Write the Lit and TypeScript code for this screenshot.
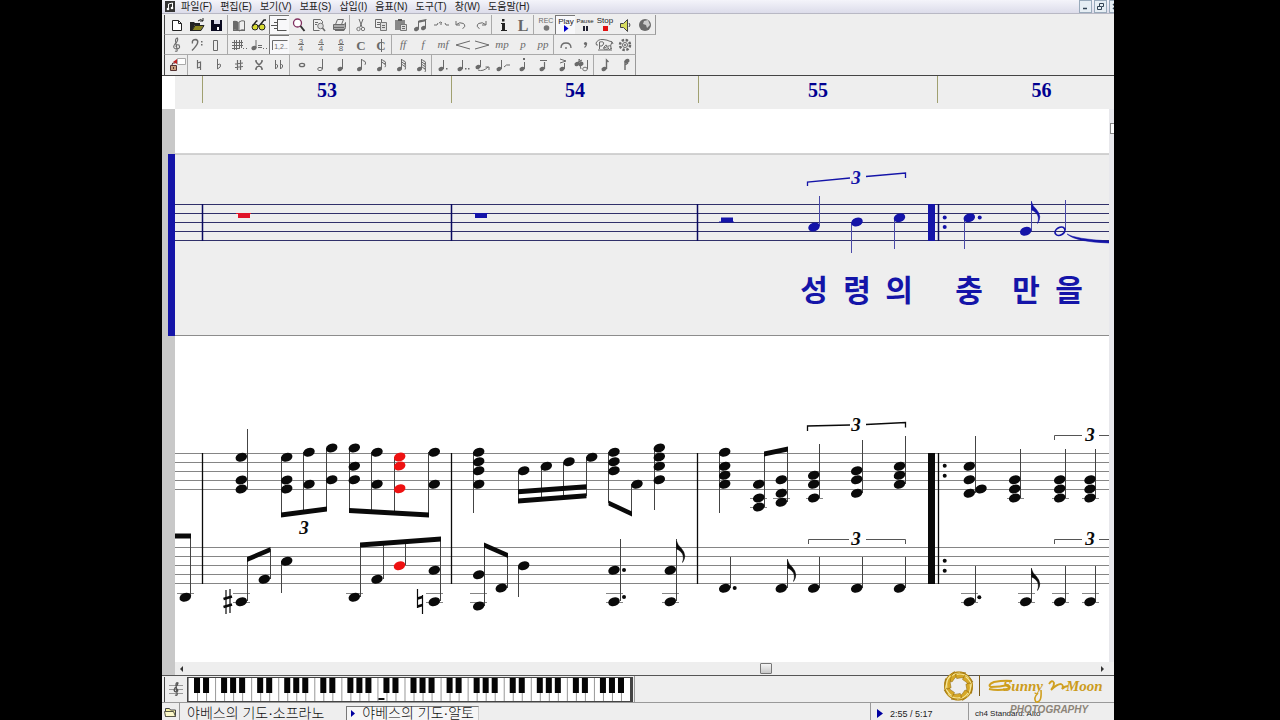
import { LitElement, html, svg, css } from "lit";
import { customElement } from "lit/decorators.js";

const INK = "#0a0a0a";
const BLUE = "#1414a8";
const RED = "#ee1111";

/* ---------- toolbar icons, 20 x 18 each ---------- */

const G = "#6a6a6a";
const line = (d: string, color = G, w = 1) =>
  svg`<path d=${d} fill="none" stroke=${color} stroke-width=${w} />`;
const fill = (d: string, color = G) => svg`<path d=${d} fill=${color} />`;
const glyph = (t: string, x: number, y: number, size: number, cls = "dyn", color = G) =>
  svg`<text x=${x} y=${y} font-size=${size} class=${cls} fill=${color} text-anchor="middle">${t}</text>`;
const head = (x: number, y: number, color = G) =>
  svg`<ellipse cx=${x} cy=${y} rx="2.600" ry="2" fill=${color} transform="rotate(-20 ${x} ${y})" />`;
const flags = (n: number) =>
  Array.from({ length: n }, (_, i) => line(`M10.500 ${3 + i * 2.4}q1 2 3.500 2.400q1.200 1.400 0 3.400`));
const meter = (a: string, b: string) => svg`${glyph(a, 10, 8, 8, "num")}${glyph(b, 10, 15, 8, "num")}${line("M7 8.500h6")}`;

const icons: Record<string, unknown> = {
  new: svg`<path d="M5.500 4.500h6l3 3v7h-9z" fill="#fff" stroke="#222" />${line("M11.500 4.500v3h3", "#222")}`,
  open: svg`${fill("M3 6h4l1 1h5v2H8l-3 6H3z", "#222")}${fill("M5 14l3-5h9l-3 5z", "#8a8420")}${line("M5 14.500l3-5h9l-3 5zM11 5q3-3 5 0M16 2v3h-3", "#222")}`,
  save: svg`${fill("M4 4h11v11H4z", "#0a0a20")}${fill("M7 4h6v4H7z", "#d8d8e8")}${fill("M10 11h2v3h-2z", "#fff")}`,
  book: svg`${fill("M4 5q3-1 5.500 1v9Q7 13 4 14z")}${line("M10 6q3-2 5.500-1v9q-3-1-5.500 1zM4 14.500h12")}`,
  glasses: svg`<circle cx="6" cy="11" r="3" fill="#d8dc30" stroke="#222" /><circle cx="13" cy="11" r="3" fill="#d8dc30" stroke="#222" />${line("M3.500 10l4-5h1M11 9l4-5h2M9 10h1", "#222", 1.4)}`,
  split: svg`${line("M2 9.500h7M8.500 3v12M8.500 3.500h9M8.500 14.500h9M5 6.500h4M5 12.500h4", "#555")}`,
  zoom: svg`<circle cx="8.500" cy="7" r="4" fill="#fff" stroke="#803060" stroke-width="1.300" />${line("M11.500 10l4 5", "#333", 2)}`,
  preview: svg`${line("M4.500 14.500v-11h7l2 2v2M4.500 14.500h6M6 6.500h3M6 8.500h2")}<circle cx="11.500" cy="10" r="2.800" fill="#ddd" stroke="#777" />${line("M13.500 12l2.500 3", G, 1.6)}`,
  print: svg`${fill("M4 9h12v4H4z", "#aaa")}${line("M6.500 8.500l2-5h6l-2 5M4.500 8.500h11l1-2v5l-1 2h-11zM6 14.500h9l1-2M5 11.500h10")}`,
  cut: svg`${line("M8 3l3 8M12 3L9 11")}<circle cx="7.500" cy="13" r="1.700" fill="none" stroke="#777" /><circle cx="12" cy="13" r="1.700" fill="none" stroke="#777" />`,
  copy: svg`${line("M4.500 3.500h6v8h-6zM6 6.500h3M6 8.500h3")}<path d="M9.500 6.500h6v8h-6z" fill="#ddd" stroke="#777" />${line("M11 9.500h3M11 11.500h3")}`,
  paste: svg`${fill("M4 4h10v10H4z", "#888")}${fill("M7 3h4v2H7z", "#555")}<path d="M9.500 8.500h6v6h-6z" fill="#ddd" stroke="#777" />${line("M11 10.500h3M11 12.500h3")}`,
  beam: svg`${head(5.5, 13)}${head(12.5, 12)}${line("M7.500 13V5l8-1.500M14.500 12V4", G)}${line("M7.500 6l7-1.500", G, 1.6)}`,
  range: svg`${line("M3 9h3l1-2M14 7l1 2h3M9 8h2M8 7q2-2 3 0")}`,
  undo: svg`${line("M5 5v4h4M5.500 8.500q3-3 7-1q3 3-1 5")}`,
  redo: svg`${line("M15 5v4h-4M14.500 8.500q-3-3-7-1q-3 3 1 5")}`,
  info: svg`${fill("M8 7h4v7h2v1H8v-1h1V8H8z", "#222")}${fill("M9 3h2.500v2.500H9z", "#222")}`,
  lyric: glyph("L", 10, 15, 16, "bold", "#666"),
  rec: svg`${glyph("REC", 11, 7, 7, "tiny")}<circle cx="11.500" cy="12" r="2.800" fill="#777" />`,
  play: svg`${glyph("Play", 11, 8, 8, "tiny", "#222")}${fill("M9 9l4.500 3.500L9 16z", "#0000cc")}`,
  pause: svg`${glyph("Pause", 10, 7, 6, "tiny", "#222")}${fill("M8 10h2v5H8zM11 10h2v5h-2z", "#223")}`,
  stop: svg`${glyph("Stop", 10, 7, 8, "tiny", "#222")}${fill("M8 10h5v5H8z", "#e01010")}`,
  sound: svg`<path d="M5.500 7.500h3l4-4v12l-4-4h-3z" fill="#d8dc60" stroke="#444" />${line("M14 7q2 2 0 4", "#444")}`,
  ball: svg`<circle cx="10" cy="9" r="6" fill="#6a6a6a" />${fill("M9 5l4-1 2 5-3 3-1-3-3-1z", "#ccc")}`,
  treble: svg`${line("M8 15q3 1 2-2L8.500 5q0-3 2-3q1 3-2.500 6q-3 4 1 5q5 0 3-4q-3-1-3 2", G, 1.1)}`,
  bass: svg`${line("M5.500 7.500q-1-4 3.500-4q5 2-4 11", G, 1.4)}${fill("M14 5h1.500v1.500H14zM14 8h1.500v1.500H14z")}`,
  box: line("M6.500 4.500h4v10h-4z"),
  keysig: svg`${line("M3 6.500h11M3 9.500h11M3 12.500h8M5.500 4v10M7.500 4v10M10.500 4v8M12.500 4v8")}${fill("M14 12h1v1h-1zM17 12h1v1h-1z")}`,
  tempo: svg`${head(5, 12)}${line("M7 12V4M9 9.500h4M9 11.500h4")}${fill("M14 12h1v1h-1zM17 12h1v1h-1z")}`,
  volta: svg`${line("M3.500 14V4.500h15")}${glyph("1,2..", 12, 13, 7, "num")}`,
  m34: meter("3", "4"), m44: meter("4", "4"), m68: meter("6", "8"),
  common: glyph("C", 10, 14, 13, "bold"),
  cutc: svg`${glyph("C", 10, 14, 13, "bold")}${line("M10.500 3v13")}`,
  ff: glyph("ff", 10, 12, 11), f: glyph("f", 10, 12, 11), mf: glyph("mf", 10, 12, 11),
  mp: glyph("mp", 9, 12, 11), p: glyph("p", 10, 12, 11), pp: glyph("pp", 10, 12, 11),
  cresc: line("M17 5L3 9l14 4"), dim: line("M2 5l14 4-14 4"),
  fermata: svg`${line("M6 12q0-5 5-5t5 5", G, 1.3)}<circle cx="11" cy="12" r="1" fill="#777" />`,
  breath: svg`<circle cx="10.500" cy="7.500" r="1.600" fill=${G} />${line("M11.500 8q0 2-2 3.500", G, 1.2)}`,
  pedal: svg`${line("M4.500 13V6q5-1 4 2t-4 2M9 12q4-1 3-2.500t-3 1.500t4 2M17 6q-2 3-1 7M16 10q-4-1-3 2t4 0M1 7q2-4 7-3.500t6 1.500q4 0 4 3M1 7q0 3 2 2M3 14h14")}`,
  release: svg`<circle cx="10" cy="9" r="5" fill="none" stroke=${G} stroke-width="2.500" stroke-dasharray="2.400 1.530" /><circle cx="10" cy="9" r="2.500" fill="none" stroke=${G} /><circle cx="10" cy="9" r="1" fill=${G} />`,
  lock: svg`${fill("M4 9h5v6H4z", "#c8a080")}${line("M3.500 9.500h6v5h-6zM5 9q0-3 3-2M6.500 11v2", "#533")}${fill("M6 6l4-3v5z", "#c02020")}<path d="M10.500 2.500h8v6h-8z" fill="#fff" stroke="#aaa" />`,
  natural: line("M8.500 4v8l3-1M11.500 14V6l-3 1", G, 1.2),
  flat: line("M8.500 3v10q4-2 3-4.500q-1-1-3 .5"),
  sharp: line("M8.500 4v10M11.500 4v10M6 8l8-1M6 11.500l8-1", G, 1.2),
  dsharp: line("M7 6l6 6M13 6l-6 6M6 5h2M12 5h2M6 13h2M12 13h2", G, 1.5),
  dflat: line("M6.500 4v9q3-2 2-4q-1-1-2 0M11.500 4v9q3-2 2-4q-1-1-2 0"),
  whole: svg`<ellipse cx="11" cy="9" rx="2.600" ry="1.700" fill="none" stroke=${G} stroke-width="1.300" />`,
  half: svg`<ellipse cx="9" cy="13" rx="2.300" ry="1.600" fill="none" stroke=${G} />${line("M11.500 13V3")}`,
  quarter: svg`${head(9, 13)}${line("M11.500 13V3")}`,
  n8: svg`${head(8.5, 13)}${line("M10.500 13V3")}${flags(1)}`,
  n16: svg`${head(8.5, 13)}${line("M10.500 13V3")}${flags(2)}`,
  n32: svg`${head(8.5, 13)}${line("M10.500 13V3")}${flags(3)}`,
  n64: svg`${head(8.5, 13)}${line("M10.500 13V3")}${flags(4)}`,
  dot: svg`${head(8, 13)}${line("M10.500 13V4")}${fill("M13 12h1.500v1.500H13z")}`,
  ddot: svg`${head(7, 13)}${line("M9.500 13V4")}${fill("M12 12h1.500v1.500H12zM15 12h1.500v1.500H15z")}`,
  tie: svg`${head(5, 11)}${line("M7.500 11V4M5 14q5 2 10-3M12.500 11H16v3")}`,
  slur: svg`${head(6, 13)}${line("M8.500 13V4M11 11q2-3 6-2")}`,
  stac: svg`${head(9, 13)}${line("M11.500 13V6")}${fill("M10 2h2v2h-2z")}`,
  tenuto: svg`${head(9, 13)}${line("M11.500 13V6M7 4.500h7", G, 1.2)}`,
  accent: svg`${head(9, 13)}${line("M11.500 13V7M7 3l6 2-6 2")}`,
  grace: svg`${head(4, 8)}${line("M6 8V3l3 4M2 8l7-4M7 9l1 4")}${head(8, 8)}<ellipse cx="12" cy="13" rx="2.300" ry="1.800" fill="none" stroke="#777" />${line("M14.500 13V4")}`,
  up: svg`${head(9, 13)}${line("M11.500 13V4l2 2", G, 1.4)}`,
  down: svg`${head(12, 5)}${line("M10 5v9M10 9l3-2", G, 1.4)}`,
};

interface Group { items: string[]; gap?: boolean }
const bars: Group[][] = [
  [
    { items: ["new", "open", "save"] },
    { items: ["book", "glasses", "split*", "zoom", "preview", "print"] },
    { items: ["cut", "copy", "paste", "beam", "range", "undo", "redo"] },
    { items: ["info", "lyric"] },
    { items: ["rec", "play*", "pause", "stop", "sound", "ball"] },
  ],
  [
    { items: ["treble", "bass", "box"] },
    { items: ["keysig", "tempo", "volta*"], gap: true },
    { items: ["m34", "m44", "m68", "common", "cutc"] },
    { items: ["ff", "f", "mf", "cresc", "dim", "mp", "p", "pp"] },
    { items: ["fermata", "breath", "pedal", "release"] },
  ],
  [
    { items: ["lock"] },
    { items: ["natural", "flat", "sharp", "dsharp", "dflat"] },
    { items: ["whole", "half", "quarter", "n8", "n16", "n32", "n64"] },
    { items: ["dot", "ddot", "tie", "slur", "stac", "tenuto", "accent", "grace"] },
    { items: ["up", "down"] },
  ],
];

/* ---------- score ---------- */

type Chord = [x: number, ys: number[], color?: string];
type Seg = [x1: number, y1: number, x2: number, y2: number];

const vocalHeads: Chord[] = [
  [814, [227]], [857, [222]], [899.5, [217.7]], [969.3, [217.7]], [1025.7, [231.3]],
];
const vocalStems: Seg[] = [
  [819.5, 196, 819.5, 226], [851.5, 223, 851.5, 253], [894.5, 218, 894.5, 249],
  [964.5, 218, 964.5, 249], [1031.5, 201, 1031.5, 231], [1065.5, 200, 1065.5, 230],
];

const pianoHeads: Chord[] = [
  [241.3, [457.3, 480, 489]],
  [286.7, [457.3, 480, 489]], [309, [452.3, 484.3]], [331.7, [448, 479.7]],
  [354.3, [448, 466.3, 479.7]], [377, [452.3, 484.3]], [399.7, [457, 466, 488.7], RED], [434.3, [452.3, 484.3]],
  [478.7, [452.3, 461.7, 470.7, 484.3]],
  [523.7, [470.7]], [546.3, [466.3]], [569, [461.7]], [591.7, [457.3]],
  [614, [452.3, 461.7, 470.7]], [637, [484.3]], [659.3, [448, 457, 466.3, 479.7]],
  [724.7, [452.3, 466.3, 475.3, 484.3]],
  [758.7, [484.3, 498, 507]], [781.3, [479.7, 493.3, 502.3]],
  [813.7, [475.3, 484.3, 498]], [856.7, [470.7, 479.7, 493.3]], [899.5, [466.3, 475.3, 484.3]],
  [969.3, [466.3, 479.7, 493.3]], [981, [489]],
  [1014.7, [479.7, 489, 498]], [1059.7, [479.7, 489, 498]], [1090, [479.7, 489, 498]],
  [185.3, [597.3]], [241.3, [601.7]], [264.3, [579.3]], [286.7, [561.3]],
  [354.3, [597.3]], [377, [579.3]], [399.5, [565.7], RED], [434.3, [570.3, 601.7]],
  [478.7, [574.7, 606]], [501.3, [588]], [523.7, [565.7]],
  [614, [570.3, 601.7]], [670.3, [570.3, 601.7]],
  [724.7, [588.3]], [781.3, [588.3]], [813.7, [588.3]], [856.7, [588.3]], [899.5, [588.3]],
  [969.3, [601.7]], [1025.7, [601.7]], [1059.7, [601.7]], [1090, [601.7]],
];
const stem = (x: number, a: number, b: number): Seg => [x, a, x, b];
const pianoStems: Seg[] = [
  stem(247.5, 429, 489), stem(281.5, 457, 515), stem(303.5, 452, 512), stem(326.5, 448, 509),
  stem(349.5, 448, 510), stem(371.5, 452, 511), stem(394.5, 457, 512), stem(428.5, 452, 515),
  stem(473.5, 452, 513), stem(518.5, 471, 502), stem(541.5, 466, 498), stem(563.5, 462, 498), stem(586.5, 457, 496),
  stem(608.5, 452, 503), stem(631.5, 484, 516), stem(654.5, 448, 510),
  stem(719.5, 452, 513), stem(764.5, 453, 507), stem(787.5, 449, 502),
  stem(819.5, 444, 498), stem(862.5, 440, 493), stem(905.5, 436, 484),
  stem(975.5, 436, 493), stem(1020.5, 449, 498), stem(1065.5, 449, 498), stem(1095.5, 449, 498),
  stem(190.5, 536, 597), stem(247.5, 560, 601), stem(270.5, 549, 579), stem(281.5, 561, 593),
  stem(360.5, 545, 597), stem(383.5, 543, 579), stem(405.5, 542, 565), stem(440.5, 538, 601),
  stem(484.5, 545, 606), stem(507.5, 555, 588), stem(518.5, 566, 597),
  stem(620.5, 539, 601), stem(676.5, 539, 601),
  stem(730.5, 557, 588), stem(787.5, 559, 588), stem(819.5, 557, 588), stem(862.5, 557, 588), stem(905.5, 557, 588),
  stem(975.5, 566, 602), stem(1031.5, 568, 602), stem(1065.5, 566, 602), stem(1095.5, 566, 602),
];
const beams: Seg[] = [
  [281, 515, 327, 509], [349, 510.5, 429, 515], [175, 536, 191, 536],
  [247, 559.5, 270.5, 549.5], [360, 545, 441, 539],
  [518, 491.7, 586.5, 486.7], [518, 501, 586.5, 495.7], [608.5, 503, 632, 514],
  [484, 545, 508, 555.5], [764, 454, 788, 449],
];
const ledger = (x: number, ...ys: number[]): Seg[] => ys.map((y) => [x - 8, y, x + 9, y]);
const ledgers: Seg[] = [
  ...ledger(185, 593.5), ...ledger(241, 593.5, 602.5), ...ledger(354, 593.5), ...ledger(434, 593.5, 602.5),
  ...ledger(478, 593.5, 602.5), ...ledger(614, 593.5, 602.5), ...ledger(670, 593.5, 602.5),
  ...ledger(758, 498.5, 507.5), ...ledger(781, 498.5), ...ledger(814, 498.5),
  ...[1015, 1060, 1090].flatMap((x) => ledger(x, 498.5)),
  ...[969, 1026, 1060, 1090].flatMap((x) => ledger(x, 593.5, 602.5)),
];
const dots: [number, number][] = [
  [624, 570], [624, 597], [734.7, 588], [979.3, 597.3],
  [944.7, 465.7], [944.7, 475.7], [944.7, 560.7], [944.7, 570.7],
];
const lyrics: [number, string][] = [
  [814, "성"], [857, "령"], [899, "의"], [969, "충"], [1026, "만"], [1069, "을"],
];

const drawHeads = (list: Chord[], color: string) =>
  list.map(([x, ys, c]) => ys.map((y) => svg`<ellipse cx=${x} cy=${y} rx="5.900" ry="4.300" fill=${c ?? color} transform="rotate(-20 ${x} ${y})" />`));
const drawSegs = (list: Seg[], cls: string) =>
  list.map(([a, b, c, d]) => svg`<line x1=${a} y1=${b} x2=${c} y2=${d} class=${cls} />`);
const drawBeams = (list: Seg[]) =>
  list.map(([a, b, c, d]) => svg`<polygon points="${a},${b - 2.5} ${c},${d - 2.5} ${c},${d + 2.5} ${a},${b + 2.5}" fill=${INK} />`);
const staff = (ys: number[], cls: string) =>
  ys.map((y) => svg`<line x1="175" x2="1109" y1=${y} y2=${y} class=${cls} />`);
const flag = (x: number, y: number, color: string) =>
  svg`<path d="M${x} ${y}q1 4 5 7.500q6 7 1 14q2.500-7-2-11q-2-2-4-2.500z" fill=${color} stroke=${color} stroke-width=".5" />`;
const triplet = (x: number, y: number, color: string) =>
  svg`<text x=${x} y=${y} class="triplet" fill=${color}>3</text>`;

const score = svg`
  <rect x="162" y="109" width="13" height="566" fill="#c8c8c8" />
  <rect x="175" y="154" width="934" height="182" fill="#eeeeee" />
  <path d="M175 154h934" stroke="#c4c4c4" stroke-width="1.500" />
  <path d="M175 335.500h934" stroke="#8c8c8c" />
  <rect x="168" y="154" width="7" height="182" fill=${BLUE} />

  ${staff([204.5, 213.5, 222.5, 231.5, 240.5], "voice")}
  <path d="M202.500 204v37M451.500 204v37M697.500 204v37M938.500 204v37" stroke="#0a0a60" stroke-width="1.500" />
  <rect x="928" y="204" width="7" height="37" fill=${BLUE} />
  <circle cx="944.700" cy="217.500" r="2" fill=${BLUE} /><circle cx="944.700" cy="227" r="2" fill=${BLUE} />
  <circle cx="979.700" cy="217.500" r="2" fill=${BLUE} />
  <path d="M236 213h15v1h-1v4h-12v-4h-2z" fill="#e01428" />
  <path d="M473 213h15v1h-1v4h-12v-4h-2z" fill=${BLUE} />
  <path d="M719 222.500h15v-1h-1v-4h-12v4h-2z" fill=${BLUE} />
  ${drawSegs(vocalStems, "stem-voice")}
  ${drawHeads(vocalHeads, BLUE)}
  <ellipse cx="1060" cy="231.300" rx="5.200" ry="3.800" fill="none" stroke=${BLUE} stroke-width="1.700" transform="rotate(-30 1060 231.300)" />
  ${flag(1031.5, 202, BLUE)}
  <path d="M1067 234q8 5 42 7v2q-34-1-42-9z" fill=${BLUE} stroke=${BLUE} stroke-width=".5" />
  <path d="M807.500 186v-4l42.500-4M866 176.500l39.500-3.500v5" class="bracket" stroke=${BLUE} />
  ${triplet(856, 184, BLUE)}
  ${lyrics.map(([x, t]) => svg`<text x=${x} y="301" class="lyric" fill=${BLUE}>${t}</text>`)}

  ${staff([453.5, 462.5, 471.5, 480.5, 489.5, 547.5, 556.5, 565.5, 574.5, 583.5], "piano")}
  <path d="M202.500 453v131M451.500 453v131M697.500 453v131M938.500 453v131" stroke=${INK} stroke-width="1.300" />
  <rect x="928" y="453" width="7" height="131" fill=${INK} />
  ${drawSegs(ledgers, "piano")}
  ${drawSegs(pianoStems, "stem")}
  ${drawBeams(beams)}
  ${drawHeads(pianoHeads, INK)}
  ${dots.map(([x, y]) => svg`<circle cx=${x} cy=${y} r="2" fill=${INK} />`)}
  ${flag(676.5, 541, INK)}${flag(787.5, 560, INK)}${flag(1031.5, 569, INK)}
  <path d="M226 590v24M230 589v24" stroke=${INK} stroke-width="1.200" />
  <path d="M223.500 599l8.500-2.500M223.500 607l8.500-2.500" stroke=${INK} stroke-width="2.600" />
  <path d="M417.500 589v19M422.500 595v19" stroke=${INK} stroke-width="1.200" />
  <path d="M417.500 598.500l5-1.500M417.500 606.500l5-1.500" stroke=${INK} stroke-width="2.600" />
  <path d="M807.500 431v-5l42.500-1M866 424.500l39.500-2v5" class="bracket" stroke=${INK} />
  <path d="M1054.500 440v-4.500H1082M1099 435.500h10M808.500 544v-4.500H849M866 539.500h39.500v4.500M1054.500 544v-4.500H1082M1099 539.500h10" class="bracket thin" stroke="#555" />
  ${triplet(856, 431, INK)}${triplet(1090, 441, INK)}${triplet(304, 534, INK)}
  ${triplet(856, 545, INK)}${triplet(1090, 545, INK)}
`;

/* ---------- on-screen piano ---------- */

const WHITE_KEYS = 49;
const blackAt = Array.from({ length: WHITE_KEYS }, (_, i) => i).filter((i) => [1, 2, 4, 5, 6].includes(i % 7));
const piano = svg`
  <rect width="441" height="23" fill="#fff" />
  ${Array.from({ length: WHITE_KEYS }, (_, i) => svg`<rect x=${i * 9} y="0" width="1" height="23" fill="#999" />`)}
  ${blackAt.map((i) => svg`<rect x=${i * 9 - 3} y="0" width="6" height="15" fill="#050505" />`)}
  <rect x="190" y="20" width="6" height="2" fill="#111" />
`;

const menu = ["파일(F)", "편집(E)", "보기(V)", "보표(S)", "삽입(I)", "음표(N)", "도구(T)", "창(W)", "도움말(H)"];
const measures = [
  { n: "53", w: 249 }, { n: "54", w: 247 }, { n: "55", w: 239 }, { n: "56", w: 208 },
];

@customElement("app-root")
export class AppRoot extends LitElement {
  static styles = css`
    :host { display: block; height: 100vh; background: #000; overflow: hidden;
      font-family: "Liberation Sans", "Noto Sans CJK KR", sans-serif; color: #222; }
    * { box-sizing: border-box; }
    button { font: inherit; color: inherit; border: 0; padding: 0; background: none; }
    svg { display: block; }
    .window { position: relative; height: 100%; margin: 0 166px 0 162px; background: #eee;
      display: flex; flex-direction: column; overflow: hidden; }
    .menu { display: flex; align-items: center; height: 14px; flex: none; font-size: 10px; padding-left: 3px;
      background: linear-gradient(#f4f4fa, #dcdcea); border-bottom: 1px solid #b8b8c4; overflow: hidden; }
    .menu nav { display: flex; gap: 8px; margin-left: 6px; flex: 1; }
    .menu nav button { line-height: 12px; white-space: nowrap; }
    .winbtns { display: flex; gap: 2px; margin-right: -8px; }
    .winbtns button { width: 13px; height: 13px; background: #e6eef4; border: 1px solid #9ab; }
    .bars { flex: none; padding-top: 1px; border-bottom: 1px solid #444; }
    .bar { display: flex; width: max-content; height: 20px; margin-left: 2px; padding-left: 2px;
      border-left: 1px solid #444; border-right: 1px solid #999; border-bottom: 1px solid #aaa; }
    .bar:last-child { border-bottom: 0; }
    .group { display: flex; }
    .group + .group { border-left: 1px solid #aaa; padding-left: 1px; }
    .gap + .group { border-left-color: transparent; }
    .tool { width: 20px; height: 19px; }
    .tool svg { overflow: visible; }
    .tool.on { border-left: 1px solid #777; border-top: 1px solid #777; background: #f8f8fa; }
    .tool.on svg { margin: -1px; }
    .dyn { font-family: "Liberation Serif", serif; font-style: italic; }
    .num { font-family: "Liberation Sans", sans-serif; }
    .bold { font-family: "Liberation Serif", serif; font-weight: bold; }
    .tiny { font-family: "Liberation Sans", sans-serif; }
    .ruler { flex: none; display: flex; height: 33px; border-left: 13px solid #fff; padding-left: 27px; overflow: hidden; }
    .measure { flex: none; height: 27px; border-left: 1px solid #a0a070; text-align: center;
      font: bold 20px/29px "Liberation Serif", serif; color: #000090; }
    .work { flex: 1; min-height: 0; display: flex; background: #fff; }
    .score { flex: 1; min-width: 0; height: 100%; }
    .voice { stroke: #30306a; }
    .piano { stroke: #858585; }
    .stem { stroke: #444; }
    .stem-voice { stroke: #4a4aa8; }
    .bracket { fill: none; stroke-width: 1.3; }
    .bracket.thin { stroke-width: 1; }
    .triplet { font: italic bold 19px "Liberation Serif", serif; text-anchor: middle; }
    .lyric { font: bold 30px "Noto Sans CJK KR", sans-serif; text-anchor: middle; }
    .vscroll { width: 5px; background: #e8e8ec; padding: 14px 0 0 1px; overflow: hidden; }
    .vthumb { width: 10px; height: 11px; background: #fff; border: 1px solid #888; }
    .hscroll { flex: none; display: flex; align-items: center; height: 13px; padding: 0 6px 0 1px;
      border-left: 13px solid #c8c8c8; background: #eee; }
    .hscroll button { width: 11px; height: 11px; display: grid; place-items: center; flex: none; }
    .hscroll input { appearance: none; flex: 1; min-width: 0; height: 12px; margin: 0; background: none; }
    .hscroll input::-webkit-slider-thumb { appearance: none; width: 12px; height: 11px;
      border: 1px solid #777; border-radius: 1px; background: linear-gradient(#f4f4f4, #c8c8c8); }
    .keys { flex: none; display: flex; align-items: center; height: 28px; border-top: 1px solid #555;
      border-bottom: 1px solid #999; padding-left: 2px; }
    .keytool { width: 23px; height: 25px; border-left: 1px solid #444; display: grid; place-items: center; }
    .keyboard { width: 446px; border: solid #444; border-width: 1px 3px 1px 1px; }
    .keyend { width: 2px; height: 26px; border-right: 1px solid #999; }
    .status { flex: none; display: flex; align-items: stretch; height: 17px; overflow: hidden; font-size: 9px; }
    .folder { width: 18px; border-right: 1px solid #999; display: grid; place-items: center; }
    .tab { font-size: 14px; font-weight: 300; line-height: 18px; white-space: nowrap; height: 20px; padding: 0 8px 0 7px;
      display: flex; align-items: center; gap: 6px; color: #111; }
    .tabs { display: flex; gap: 14px; align-items: flex-start; flex: 1; }
    .tab.on { border: 1px solid #777; border-right-color: #ccc; margin-top: 3px; padding: 0 4px; background: #f6f6f6; line-height: 13px; align-items: flex-start; }
    .tab.on svg { margin-top: 3px; }
    .cell { display: flex; align-items: center; gap: 6px; border-left: 1px solid #999; padding: 4px 6px 0; white-space: nowrap; }
    .time { width: 98px; }
    .channel { width: 146px; font-size: 8px; }
    .brand { position: absolute; right: 6px; bottom: 2px; width: 166px; height: 48px; }
    .script { font: italic bold 15px "Liberation Serif", serif; }
    .photo { font: italic bold 10px "Liberation Sans", sans-serif; }
  `;

  private tool(id: string) {
    const on = id.endsWith("*");
    const name = on ? id.slice(0, -1) : id;
    return html`<button class="tool ${on ? "on" : ""}" aria-label=${name} aria-pressed=${on}>
      <svg width="20" height="18" viewBox="0 0 20 18">${icons[name]}</svg></button>`;
  }

  render() {
    return html`
      <div class="window">
        <header class="menu">
          <svg width="10" height="11" viewBox="0 0 10 11"><rect width="10" height="11" fill="#333" />
            <path d="M3.500 8V3l4-1v5" fill="none" stroke="#fff" /><circle cx="3" cy="8" r="1.300" fill="#fff" /><circle cx="7" cy="7" r="1.300" fill="#fff" /></svg>
          <nav>${menu.map((m) => html`<button>${m}</button>`)}</nav>
          <div class="winbtns">
            <button aria-label="minimize"><svg width="11" height="11"><path d="M3 7.500h4" stroke="#345" stroke-width="1.500" /></svg></button>
            <button aria-label="restore"><svg width="11" height="11"><path d="M4.500 5V2.500h4v3H7M2.500 5.500h4v3h-4z" fill="none" stroke="#345" /></svg></button>
            <button aria-label="close"><svg width="11" height="11"><path d="M3 3l5 5M8 3L3 8" stroke="#345" stroke-width="1.500" /></svg></button>
          </div>
        </header>
        <div class="bars">
          ${bars.map((b) => html`<div class="bar" role="toolbar">
            ${b.map((g) => html`<div class="group ${g.gap ? "gap" : ""}">${g.items.map((i) => this.tool(i))}</div>`)}
          </div>`)}
        </div>
        <div class="ruler">
          ${measures.map((m) => html`<div class="measure" style="width:${m.w}px">${m.n}</div>`)}
        </div>
        <main class="work">
          <svg class="score" viewBox="162 109 947 553" preserveAspectRatio="xMinYMin meet">${score}</svg>
          <div class="vscroll"><div class="vthumb"></div></div>
        </main>
        <div class="hscroll">
          <button aria-label="left"><svg width="5" height="6"><path d="M4 0v6L1 3z" fill="#333" /></svg></button>
          <input type="range" min="0" max="1000" value="638" aria-label="position" />
          <button aria-label="right"><svg width="5" height="6"><path d="M1 0v6l3-3z" fill="#333" /></svg></button>
        </div>
        <div class="keys">
          <button class="keytool" aria-label="clef"><svg width="16" height="16"><path d="M1 4.500h14M1 8.500h14M1 12.500h14" stroke="#999" />
            <path d="M7 14q3 1 2-2L8 4q0-3 2-2q0 2-3 5q-2 3 1 4q3-1 1-3" fill="none" stroke="#555" stroke-width="1.300" /></svg></button>
          <svg class="keyboard" viewBox="0 0 441 23" height="25" preserveAspectRatio="none">${piano}</svg>
          <div class="keyend"></div>
        </div>
        <footer class="status">
          <button class="folder" aria-label="folder"><svg width="14" height="12"><path d="M1.500 10.500v-8h4l1 1.500h5v6.500z" fill="#f4f0a0" stroke="#444" /><path d="M1.500 10.500l-1-5h9l2 5z" fill="#fbf8c8" stroke="#554" /></svg></button>
          <div class="tabs">
            <button class="tab">야베스의 기도·소프라노</button>
            <button class="tab on"><svg width="5" height="7"><path d="M0 0v7l4-3.500z" fill="#0000a0" /></svg>야베스의 기도·알토</button>
          </div>
          <div class="cell time"><svg width="7" height="9"><path d="M0 0v9l6-4.500z" fill="#0000a0" /></svg>2:55 / 5:17</div>
          <div class="cell channel">ch4 Standard: Alto</div>
        </footer>
        <svg class="brand" viewBox="942 670 166 48" role="img">
          <defs><linearGradient id="gold" x1="0" y1="0" x2="0" y2="1">
            <stop offset="0" stop-color="#b8860b" /><stop offset=".5" stop-color="#e8c040" /><stop offset="1" stop-color="#c08a10" /></linearGradient></defs>
          <circle cx="958.500" cy="686" r="12" fill="none" stroke="#cf9c1a" stroke-width="5" />
          ${Array.from({ length: 8 }, (_, i) => svg`
            <path d="M948 680q4-9 13-8l5 1q-9 0-14 9z" fill="#d6a828" stroke="#8c6408" stroke-width=".5" transform="rotate(${i * 45} 958.500 686)" />
            <path d="M949 679q4-6 11-6" fill="none" stroke="#f8e898" stroke-width="1.200" transform="rotate(${i * 45} 958.500 686)" />`)}
          <path d="M979.500 675v21" stroke="#7a5a18" />
          <path d="M1012 681q-8-1-18 1q-7 3-3 5q9 0 17-2q4 3-1 4q-9 2-18 0" fill="none" stroke="#d0a020" stroke-width="2" />
          <text x="1003" y="691" class="script" fill="#cc9c1c">Sunny</text>
          <path d="M1041 690q1 13-5 12q-3-4 2-9" fill="none" stroke="#d0a020" stroke-width="1.600" />
          <path d="M1049 684q3-5 5-1q0 4-3 7q6-6 10-6q3 1 1 5q3-3 6-3" fill="none" stroke="#d0a020" stroke-width="1.800" />
          <text x="1066" y="691" class="script" fill="#cc9c1c">Moon</text>
          <text x="1010" y="713" class="photo" fill="#8c8478">PHOTOGRAPHY</text>
        </svg>
      </div>
    `;
  }
}
